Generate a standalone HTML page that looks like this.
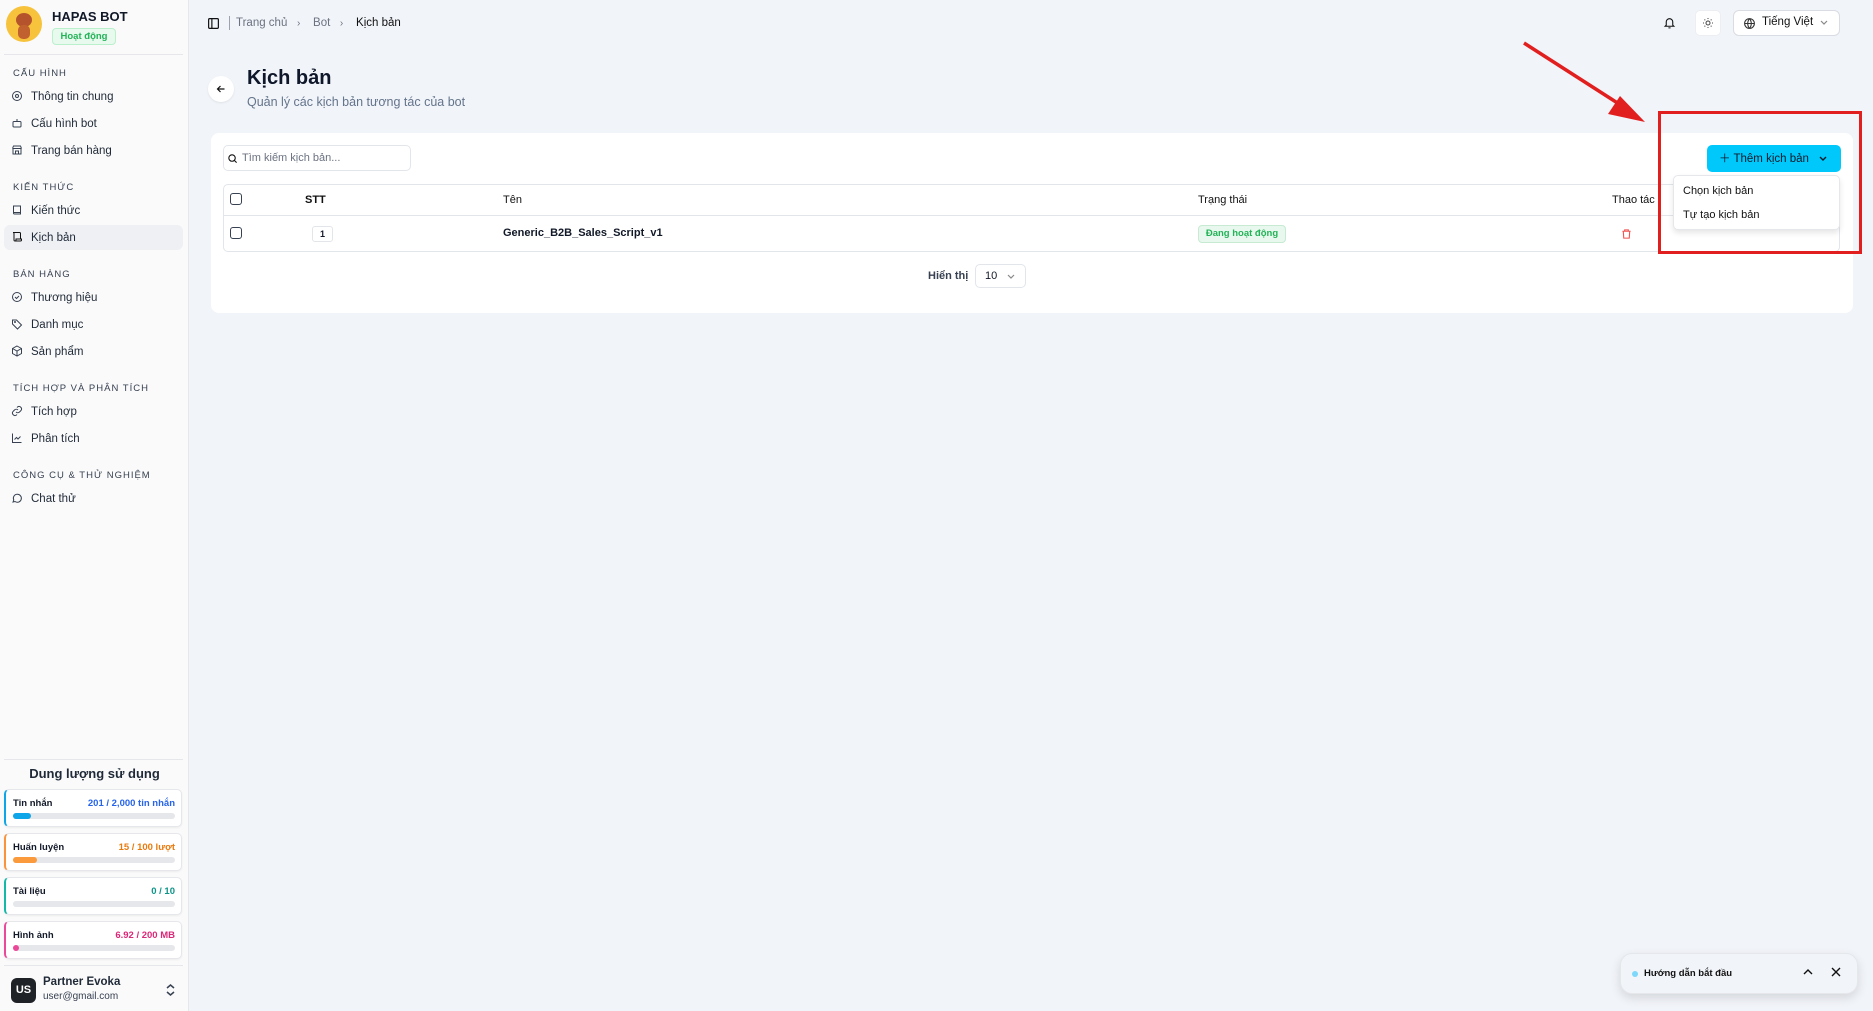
<!DOCTYPE html>
<html><head><meta charset="utf-8">
<style>
*{box-sizing:border-box;margin:0;padding:0}
body{width:1873px;height:1011px;overflow:hidden;background:#f1f4f9;font-family:"Liberation Sans","Noto Sans CJK SC",sans-serif;color:#111827;position:relative}
.a{position:absolute}
.sb{left:0;top:0;width:189px;height:1011px;background:#fafafa;border-right:1px solid #e5e7eb}
.sec{position:absolute;left:13px;font-size:9.5px;letter-spacing:1px;color:#374151}
.it{position:absolute;left:4px;width:179px;height:25px;font-size:11.5px;color:#1f2937;display:flex;align-items:center;padding-left:27px;border-radius:6px}
.it svg{position:absolute;left:7px;top:6px}
.card{position:absolute;left:4px;width:178px;height:38px;background:#fff;border:1px solid #e5e7eb;border-radius:5px;box-shadow:0 1px 2px rgba(0,0,0,.06)}
.card .l{position:absolute;left:7px;top:8px;font-size:9.5px;font-weight:bold}
.card .r{position:absolute;right:6px;top:8px;font-size:9.5px;font-weight:bold}
.card .bar{position:absolute;left:7px;right:6px;top:23px;height:6px;border-radius:3px;background:#e5e7eb}
.card .bar i{display:block;height:6px;border-radius:3px}
.th{position:absolute;top:194px;font-size:11px;color:#111}
</style></head><body>
<div class="a sb">
 <div class="a" style="left:6px;top:6px;width:36px;height:36px;border-radius:50%;background:#f7c23c;overflow:hidden">
  <div class="a" style="left:10px;top:7px;width:16px;height:14px;border-radius:50%;background:#b5542c"></div>
  <div class="a" style="left:12px;top:19px;width:12px;height:14px;border-radius:5px;background:#c0612f"></div>
 </div>
 <div class="a" style="left:52px;top:9px;font-size:13px;font-weight:bold">HAPAS BOT</div>
 <div class="a" style="left:52px;top:28px;width:64px;height:17px;border:1px solid #bbf0cc;background:#e8f9ee;border-radius:4px;color:#22b357;font-size:9.5px;font-weight:bold;text-align:center;line-height:15px">Hoạt động</div>
 <div class="a" style="left:4px;top:54px;width:179px;height:1px;background:#e5e7eb"></div>
 <div class="sec" style="top:68px">CẤU HÌNH</div>
 <div class="it" style="top:84px"><svg width="12" height="12" viewBox="0 0 24 24" fill="none" stroke="#374151" stroke-width="2"><circle cx="12" cy="12" r="3"/><circle cx="12" cy="12" r="9"/></svg>Thông tin chung</div>
 <div class="it" style="top:111px"><svg width="12" height="12" viewBox="0 0 24 24" fill="none" stroke="#374151" stroke-width="2"><rect x="4" y="9" width="16" height="11" rx="2"/><path d="M12 4v5M9 14h.01M15 14h.01"/></svg>Cấu hình bot</div>
 <div class="it" style="top:138px"><svg width="12" height="12" viewBox="0 0 24 24" fill="none" stroke="#374151" stroke-width="2"><path d="M3 9l2-5h14l2 5M4 9v11h16V9M3 9h18M9 20v-6h6v6"/></svg>Trang bán hàng</div>
 <div class="sec" style="top:182px">KIẾN THỨC</div>
 <div class="it" style="top:198px"><svg width="12" height="12" viewBox="0 0 24 24" fill="none" stroke="#374151" stroke-width="2"><path d="M5 4h14v16H7a2 2 0 0 1-2-2z M5 17h14"/></svg>Kiến thức</div>
 <div class="it" style="top:225px;background:#eef0f4"><svg width="12" height="12" viewBox="0 0 24 24" fill="none" stroke="#111" stroke-width="2"><path d="M8 20h11a2 2 0 0 0 2-2v-2H10v2a2 2 0 0 1-4 0V5a2 2 0 0 0-2-2h13a2 2 0 0 1 2 2v11"/></svg>Kịch bản</div>
 <div class="sec" style="top:269px">BÁN HÀNG</div>
 <div class="it" style="top:285px"><svg width="12" height="12" viewBox="0 0 24 24" fill="none" stroke="#374151" stroke-width="2"><circle cx="12" cy="12" r="9"/><path d="M8 12l3 3 5-5"/></svg>Thương hiệu</div>
 <div class="it" style="top:312px"><svg width="12" height="12" viewBox="0 0 24 24" fill="none" stroke="#374151" stroke-width="2"><path d="M3 12V4h8l10 10-8 8z"/><circle cx="8" cy="8" r="1"/></svg>Danh mục</div>
 <div class="it" style="top:339px"><svg width="12" height="12" viewBox="0 0 24 24" fill="none" stroke="#374151" stroke-width="2"><path d="M12 2l9 5v10l-9 5-9-5V7z M3 7l9 5 9-5 M12 12v10"/></svg>Sản phẩm</div>
 <div class="sec" style="top:383px">TÍCH HỢP VÀ PHÂN TÍCH</div>
 <div class="it" style="top:399px"><svg width="12" height="12" viewBox="0 0 24 24" fill="none" stroke="#374151" stroke-width="2"><path d="M10 14a5 5 0 0 0 7 0l3-3a5 5 0 0 0-7-7l-1 1M14 10a5 5 0 0 0-7 0l-3 3a5 5 0 0 0 7 7l1-1"/></svg>Tích hợp</div>
 <div class="it" style="top:426px"><svg width="12" height="12" viewBox="0 0 24 24" fill="none" stroke="#374151" stroke-width="2"><path d="M3 3v18h18M7 15l4-4 3 3 5-5"/></svg>Phân tích</div>
 <div class="sec" style="top:470px">CÔNG CỤ &amp; THỬ NGHIỆM</div>
 <div class="it" style="top:486px"><svg width="12" height="12" viewBox="0 0 24 24" fill="none" stroke="#374151" stroke-width="2"><path d="M4 20l1.5-4A8 8 0 1 1 8 19z"/></svg>Chat thử</div>

 <div class="a" style="left:4px;top:759px;width:179px;height:1px;background:#e5e7eb"></div>
 <div class="a" style="left:0;width:189px;top:766px;text-align:center;font-size:13px;font-weight:bold;color:#1f2937">Dung lượng sử dụng</div>
 <div class="card" style="top:789px;border-left:2px solid #0ea5e9"><div class="l">Tin nhắn</div><div class="r" style="color:#2563eb">201 / 2,000 tin nhắn</div><div class="bar"><i style="width:11%;background:#0ea5e9"></i></div></div>
 <div class="card" style="top:833px;border-left:2px solid #fb923c"><div class="l">Huấn luyện</div><div class="r" style="color:#ea7a0c">15 / 100 lượt</div><div class="bar"><i style="width:15%;background:#fb9a3c"></i></div></div>
 <div class="card" style="top:877px;border-left:2px solid #14b8a6"><div class="l">Tài liệu</div><div class="r" style="color:#0d9488">0 / 10</div><div class="bar"></div></div>
 <div class="card" style="top:921px;border-left:2px solid #ec4899"><div class="l">Hình ảnh</div><div class="r" style="color:#db2777">6.92 / 200 MB</div><div class="bar"><i style="width:6px;background:#ec4899"></i></div></div>
 <div class="a" style="left:4px;top:965px;width:179px;height:1px;background:#e5e7eb"></div>
 <div class="a" style="left:11px;top:978px;width:25px;height:25px;border-radius:6px;background:#1f2226;color:#fff;font-size:11px;font-weight:bold;text-align:center;line-height:25px">US</div>
 <div class="a" style="left:43px;top:976px;font-size:11.5px;font-weight:bold;color:#1f2937">Partner Evoka</div>
 <div class="a" style="left:43px;top:991px;font-size:10px;color:#374151">user@gmail.com</div>
 <svg class="a" style="left:165px;top:983px" width="11" height="14" viewBox="0 0 11 14" fill="none" stroke="#374151" stroke-width="1.5"><path d="M2 5l3.5-3 3.5 3M2 9l3.5 3 3.5-3"/></svg>
</div>

<!-- topbar -->
<svg class="a" style="left:207px;top:17px" width="13" height="13" viewBox="0 0 24 24" fill="none" stroke="#111" stroke-width="2.2"><rect x="3" y="3" width="18" height="18" rx="2"/><path d="M9 3v18"/></svg>
<div class="a" style="left:229px;top:16px;width:1px;height:14px;background:#9ca3af"></div>
<div class="a" style="left:236px;top:17px;font-size:11.5px;color:#6b7280">Trang chủ &nbsp;&nbsp;<span style="font-size:10px">›</span>&nbsp;&nbsp;&nbsp; Bot &nbsp;&nbsp;<span style="font-size:10px">›</span>&nbsp;&nbsp;&nbsp; <span style="color:#111">Kịch bản</span></div>
<svg class="a" style="left:1663px;top:16px" width="13" height="14" viewBox="0 0 24 24" fill="none" stroke="#111" stroke-width="2"><path d="M6 16V10a6 6 0 0 1 12 0v6l2 2H4zM10 21h4"/></svg>
<div class="a" style="left:1695px;top:10px;width:26px;height:26px;background:#fff;border-radius:5px;border:1px solid #eceef2"></div>
<svg class="a" style="left:1702px;top:17px" width="12" height="12" viewBox="0 0 24 24" fill="none" stroke="#444" stroke-width="2"><circle cx="12" cy="12" r="4"/><path d="M12 2v2M12 20v2M2 12h2M20 12h2M5 5l1.5 1.5M17.5 17.5L19 19M5 19l1.5-1.5M17.5 6.5L19 5"/></svg>
<div class="a" style="left:1733px;top:10px;width:107px;height:26px;background:#fff;border-radius:6px;border:1px solid #d9dce2"></div>
<svg class="a" style="left:1743px;top:17px" width="13" height="13" viewBox="0 0 24 24" fill="none" stroke="#333" stroke-width="2"><circle cx="12" cy="12" r="9"/><path d="M3 12h18M12 3a14 14 0 0 1 0 18M12 3a14 14 0 0 0 0 18"/></svg>
<div class="a" style="left:1762px;top:16px;font-size:11.5px;color:#111">Tiếng Việt</div>
<svg class="a" style="left:1820px;top:20px" width="8" height="6" viewBox="0 0 8 6" fill="none" stroke="#888" stroke-width="1.2"><path d="M1 1l3 3 3-3"/></svg>

<!-- title -->
<div class="a" style="left:208px;top:76px;width:26px;height:26px;border-radius:50%;background:#fff;box-shadow:0 1px 2px rgba(0,0,0,.08)"></div>
<svg class="a" style="left:215px;top:83px" width="12" height="12" viewBox="0 0 24 24" fill="none" stroke="#111" stroke-width="2.4"><path d="M19 12H5M11 6l-6 6 6 6"/></svg>
<div class="a" style="left:247px;top:67px;font-size:20px;font-weight:bold;color:#0f172a">Kịch bản</div>
<div class="a" style="left:247px;top:95px;font-size:12.5px;color:#64748b">Quản lý các kịch bản tương tác của bot</div>

<!-- main card -->
<div class="a" style="left:211px;top:133px;width:1642px;height:180px;background:#fff;border-radius:8px"></div>
<div class="a" style="left:223px;top:145px;width:188px;height:26px;border:1px solid #e2e5ea;border-radius:5px"></div>
<svg class="a" style="left:227px;top:153px" width="11" height="11" viewBox="0 0 24 24" fill="none" stroke="#111" stroke-width="2.4"><circle cx="11" cy="11" r="7"/><path d="M16 16l5 5"/></svg>
<div class="a" style="left:242px;top:152px;font-size:11px;color:#6b7280">Tìm kiếm kịch bản...</div>
<div class="a" style="left:223px;top:184px;width:1617px;height:68px;border:1px solid #e2e5ea;border-radius:5px"></div>
<div class="a" style="left:224px;top:215px;width:1615px;height:1px;background:#e2e5ea"></div>
<div class="a" style="left:230px;top:193px;width:12px;height:12px;border:1.5px solid #374151;border-radius:3px"></div>
<div class="a" style="left:230px;top:227px;width:12px;height:12px;border:1.5px solid #374151;border-radius:3px"></div>
<div class="th" style="left:305px;font-weight:bold">STT</div>
<div class="th" style="left:503px">Tên</div>
<div class="th" style="left:1198px">Trạng thái</div>
<div class="th" style="left:1612px">Thao tác</div>
<div class="a" style="left:312px;top:226px;width:21px;height:16px;border:1px solid #e2e5ea;border-radius:3px;font-size:9px;text-align:center;line-height:14px;font-weight:bold">1</div>
<div class="a" style="left:503px;top:227px;font-size:11px;font-weight:bold">Generic_B2B_Sales_Script_v1</div>
<div class="a" style="left:1198px;top:225px;width:88px;height:18px;border:1px solid #c6ebd2;background:#e9f8ee;border-radius:4px;font-size:9.5px;color:#22b357;font-weight:bold;text-align:center;line-height:16px">Đang hoạt động</div>
<svg class="a" style="left:1621px;top:228px" width="11" height="12" viewBox="0 0 24 24" fill="none" stroke="#f05252" stroke-width="2.4"><path d="M3 6h18M8 6V3h8v3M5 6l1 15h12l1-15"/></svg>
<div class="a" style="left:928px;top:270px;font-size:11px;font-weight:bold;color:#374151">Hiển thị</div>
<div class="a" style="left:975px;top:264px;width:51px;height:24px;border:1px solid #e2e5ea;border-radius:5px;font-size:11px;padding:5px 0 0 9px">10</div>
<svg class="a" style="left:1007px;top:274px" width="8" height="6" viewBox="0 0 8 6" fill="none" stroke="#888" stroke-width="1.2"><path d="M1 1l3 3 3-3"/></svg>

<!-- button + dropdown -->
<div class="a" style="left:1707px;top:145px;width:134px;height:27px;background:#00c8fb;border-radius:5px"></div>
<div class="a" style="left:1719px;top:150px;font-size:11.5px;color:#0b1a2a">＋ Thêm kịch bản</div>
<svg class="a" style="left:1819px;top:156px" width="8" height="6" viewBox="0 0 8 6" fill="none" stroke="#0b1a2a" stroke-width="1.4"><path d="M1 1l3 3 3-3"/></svg>
<div class="a" style="left:1673px;top:175px;width:167px;height:55px;background:#fff;border:1px solid #e5e7eb;border-radius:5px;box-shadow:0 3px 6px rgba(0,0,0,.1)"></div>
<div class="a" style="left:1683px;top:185px;font-size:11px;color:#111">Chọn kịch bản</div>
<div class="a" style="left:1683px;top:209px;font-size:11px;color:#111">Tự tạo kịch bản</div>

<!-- annotation -->
<div class="a" style="left:1658px;top:111px;width:204px;height:143px;border:3px solid #e21f1f"></div>
<svg class="a" style="left:0;top:0" width="1873" height="300" viewBox="0 0 1873 300"><line x1="1524" y1="43" x2="1630" y2="111" stroke="#e21f1f" stroke-width="3.5"/><polygon points="1645,122 1620,96 1608,114" fill="#e21f1f"/></svg>

<!-- toast -->
<div class="a" style="left:1620px;top:953px;width:238px;height:41px;background:#f1f4f9;border:1px solid #e5e7eb;border-radius:12px;box-shadow:0 4px 10px rgba(0,0,0,.12)"></div>
<div class="a" style="left:1632px;top:971px;width:6px;height:6px;border-radius:50%;background:#7dd8fb"></div>
<div class="a" style="left:1644px;top:968px;font-size:9.5px;font-weight:bold;color:#111">Hướng dẫn bắt đầu</div>
<svg class="a" style="left:1803px;top:968px" width="10" height="7" viewBox="0 0 10 7" fill="none" stroke="#111" stroke-width="1.4"><path d="M1 6l4-4 4 4"/></svg>
<svg class="a" style="left:1831px;top:967px" width="10" height="10" viewBox="0 0 10 10" fill="none" stroke="#111" stroke-width="1.4"><path d="M1 1l8 8M9 1l-8 8"/></svg>
</body></html>
